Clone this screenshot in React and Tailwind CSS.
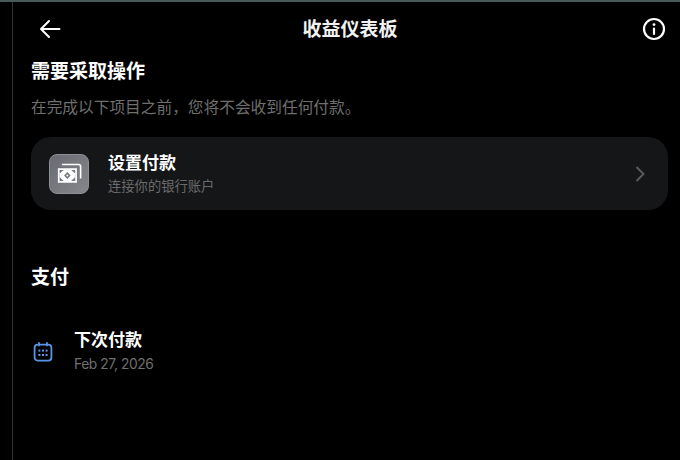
const font = { fontFamily: '"Inter","Noto Sans CJK SC",sans-serif' };

function Back() {
  return (
    <svg width="24" height="24" viewBox="0 0 24 24" fill="none" stroke="#fff" strokeWidth="2" strokeLinecap="round" strokeLinejoin="round">
      <path d="M21.5 12H3M11 4l-8 8 8 8" />
    </svg>
  );
}

function Info() {
  return (
    <svg width="24" height="24" viewBox="0 0 24 24" fill="none" stroke="#fff" strokeWidth="2.2" strokeLinecap="round">
      <circle cx="12" cy="12" r="10" />
      <path d="M12 11.5v5.5" />
      <circle cx="12" cy="7.6" r="1.4" fill="#fff" stroke="none" />
    </svg>
  );
}

function Money() {
  return (
    <svg width="30" height="30" viewBox="0 0 26 26" fill="none" className="ml-[1px]">
      <path d="M6 4.8h14.5a1.7 1.7 0 0 1 1.7 1.7V17" stroke="#fff" strokeWidth="1.4" />
      <path fillRule="evenodd" d="M2.5 8h16.5v12.5H2.5zM4 9.5v9.5h13.5V9.5z" fill="#fff" />
      <path d="M7.5 9.5h6.5l3.5 3v3l-3.5 3.5H7.5L4 15.5v-3z" fill="#fff" />
      <path d="M10.7 11.2l2.8 3.1-2.8 3.1-2.8-3.1z" fill="#70737a" />
      <circle cx="10.7" cy="14.3" r="0.9" fill="#fff" />
    </svg>
  );
}

function Calendar() {
  return (
    <svg width="22" height="22" viewBox="0 0 22 22" fill="none" stroke="#5b93e6" strokeWidth="1.8" strokeLinecap="round">
      <rect x="2.6" y="3.6" width="16.8" height="16" rx="3" />
      <path d="M7 2v2.6M15 2v2.6" />
      <g fill="#5b93e6" stroke="none">
        <rect x="6.4" y="8.6" width="2" height="2" />
        <rect x="10" y="8.6" width="2" height="2" />
        <rect x="13.6" y="8.6" width="2" height="2" />
        <rect x="6.4" y="13" width="2" height="2" />
        <rect x="10" y="13" width="2" height="2" />
        <rect x="13.6" y="13" width="2" height="2" />
      </g>
    </svg>
  );
}

export default function App() {
  return (
    <div style={font} className="w-[680px] h-[460px] overflow-hidden bg-black border-t-2 border-[#4a5a58] pl-3">
      <div className="h-full border-l border-[#2c3836] pl-[18px] pr-3">
        <header className="h-[54px] flex items-center justify-between">
          <div className="ml-[7px]"><Back /></div>
          <h1 className="text-[19px] leading-6 font-bold text-[#f2f2f2] ml-[-4px] mt-[2px]">收益仪表板</h1>
          <div className="mr-[2px]"><Info /></div>
        </header>
        <h2 className="text-[19px] leading-[26px] font-bold text-white mt-[3px]">需要采取操作</h2>
        <p className="text-[15.7px] leading-5 text-[#6f6f6f] mt-[13px]">在完成以下项目之前，您将不会收到任何付款。</p>
        <div className="mt-[19px] h-[73px] rounded-[20px] bg-[#151618] flex items-center pl-[18px] pr-[22px]">
          <div className="w-10 h-10 rounded-lg border border-[#8d8f94] bg-gradient-to-br from-[#686b72] to-[#85878c] flex items-center justify-center">
            <Money />
          </div>
          <div className="ml-[19px] flex-1">
            <div className="text-[17px] leading-[21px] font-bold text-white">设置付款</div>
            <div className="text-[13.3px] leading-[18px] text-[#6a6a6a] mt-[3px]">连接你的银行账户</div>
          </div>
          <svg width="12" height="18" viewBox="0 0 12 18" fill="none" stroke="#5a5a5c" strokeWidth="2">
            <path d="M2.5 2l7 7-7 7" />
          </svg>
        </div>
        <h2 className="text-[19px] leading-[26px] font-bold text-white mt-[55px]">支付</h2>
        <div className="mt-[39px] flex items-center">
          <div className="ml-[1px]"><Calendar /></div>
          <div className="ml-[20px]">
            <div className="text-[17px] leading-[21px] font-bold text-white">下次付款</div>
            <div className="text-[13.8px] leading-[18px] tracking-[-0.03em] text-[#6f6f6f] mt-[4px]">Feb 27, 2026</div>
          </div>
        </div>
      </div>
    </div>
  );
}
